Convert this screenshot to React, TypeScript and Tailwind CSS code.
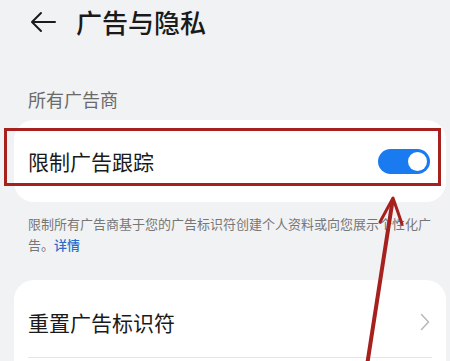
import { useState } from 'react';

const cjk = { fontFamily: '"Noto Sans CJK SC", "Noto Sans", sans-serif' };

export default function App() {
  const [limited, setLimited] = useState(true);

  return (
    <div className="relative w-[450px] h-[361px] overflow-hidden bg-[#f1f2f4]" style={cjk}>
      {/* header */}
      <div className="h-[44px] pl-[30px] flex items-center gap-[20px]">
        <svg width="26" height="22" viewBox="0 0 26 22" fill="none">
          <path d="M25 11H2M11 2L2 11L11 20" stroke="#1c1c1c" strokeWidth="2" strokeLinecap="round" strokeLinejoin="round" />
        </svg>
        <h1 className="text-[26px] leading-[34px] font-medium text-[#1a1a1a]">广告与隐私</h1>
      </div>

      <div className="mt-[43px] pl-[28px] text-[18px] leading-[24px] text-[#6a6a6a]">所有广告商</div>

      {/* limit tracking card */}
      <div className="relative mt-[9px] ml-[14px] mr-[4px] h-[82px] rounded-[20px] bg-white pl-[14px] pr-[16px] flex items-center justify-between">
        <span className="text-[21px] leading-[28px] text-[#1a1a1a]">限制广告跟踪</span>
        <button
          onClick={() => setLimited(!limited)}
          className={`w-[52px] h-[25px] rounded-full p-[3px] flex items-center ${limited ? 'bg-[#1a7bf0] justify-end' : 'bg-[#c9c9c9] justify-start'}`}
        >
          <span className="w-[19px] h-[19px] rounded-full bg-white" />
        </button>
        {/* annotation box */}
        <div className="absolute left-[-10px] top-[8px] w-[437px] h-[58px] border-[3px] border-[#a6201e] pointer-events-none" />
      </div>

      <p className="mt-[11px] pl-[28px] pr-[14px] text-[13px] leading-[21px] text-[#767676]">
        限制所有广告商基于您的广告标识符创建个人资料或向您展示个性化广告。
        <span className="text-[#2a6ccc] font-medium">详情</span>
      </p>

      {/* reset card */}
      <div className="mt-[25px] ml-[14px] mr-[4px] h-[120px] rounded-[20px] bg-white">
        <div className="mx-[14px] h-[78px] pt-[6px] flex items-center justify-between border-b border-[#e6e6e6]">
          <span className="text-[21px] leading-[28px] text-[#1a1a1a]">重置广告标识符</span>
          <svg width="10" height="18" viewBox="0 0 10 18" fill="none" className="mr-[2px]">
            <path d="M1.5 1.5L8.5 9L1.5 16.5" stroke="#b9b9b9" strokeWidth="1.5" strokeLinecap="round" strokeLinejoin="round" />
          </svg>
        </div>
      </div>

      {/* annotation arrow */}
      <svg className="absolute left-0 top-0 pointer-events-none" width="450" height="361" viewBox="0 0 450 361" fill="none">
        <path d="M366 372L392.5 201" stroke="#a6201e" strokeWidth="4" strokeLinecap="round" />
        <path d="M380 222L393 198L402 224" stroke="#a6201e" strokeWidth="3" strokeLinecap="round" strokeLinejoin="round" />
      </svg>
    </div>
  );
}
